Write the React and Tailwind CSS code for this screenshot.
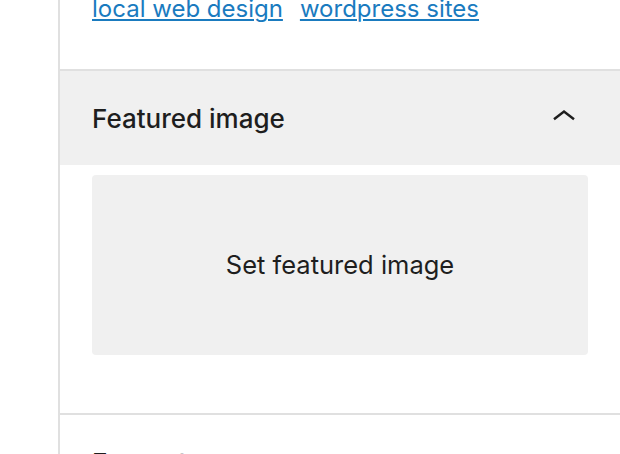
import React from "react";

const tags = ["local web design", "wordpress sites"];

const ChevronUp = () => (
  <svg width="24" height="24" viewBox="0 0 24 24" fill="none" className="mr-[44px] shrink-0">
    <path d="M2 13.2 L12 5.6 L22 13.2" stroke="#1e1e1e" strokeWidth="2.5" />
  </svg>
);

const PanelHeader = ({ title, open }) => (
  <div className={`flex h-[94px] items-center justify-between pl-8 ${open ? "bg-[#f0f0f0]" : ""}`}>
    <h2 className="text-[26px] font-medium text-[#1e1e1e]">{title}</h2>
    {open && <ChevronUp />}
  </div>
);

export default function App() {
  return (
    <div className="flex h-screen overflow-hidden bg-white font-['Inter',sans-serif]">
      <div className="w-[58px] shrink-0" />
      <div className="flex-1 border-l-2 border-[#e0e0e0]">
        {/* tags panel, cut off at the top */}
        <div className="flex h-[71px] items-start border-b-2 border-[#e0e0e0] px-8">
          <div className="-mt-[6px] flex gap-[17px] text-[24px] leading-[30px]">
            {tags.map((tag) => (
              <a
                key={tag}
                href="#"
                className="text-[#1a7bbf] underline decoration-2 underline-offset-[2px]"
              >
                {tag}
              </a>
            ))}
          </div>
        </div>

        {/* featured image */}
        <div className="border-b-2 border-[#e0e0e0]">
          <PanelHeader title="Featured image" open />
          <div className="px-8 pt-[10px] pb-[58px]">
            <button className="flex h-[180px] w-full items-center justify-center rounded bg-[#f0f0f0] text-[25.5px] text-[#1e1e1e]">
              Set featured image
            </button>
          </div>
        </div>

        <PanelHeader title="Excerpt" />
      </div>
    </div>
  );
}
